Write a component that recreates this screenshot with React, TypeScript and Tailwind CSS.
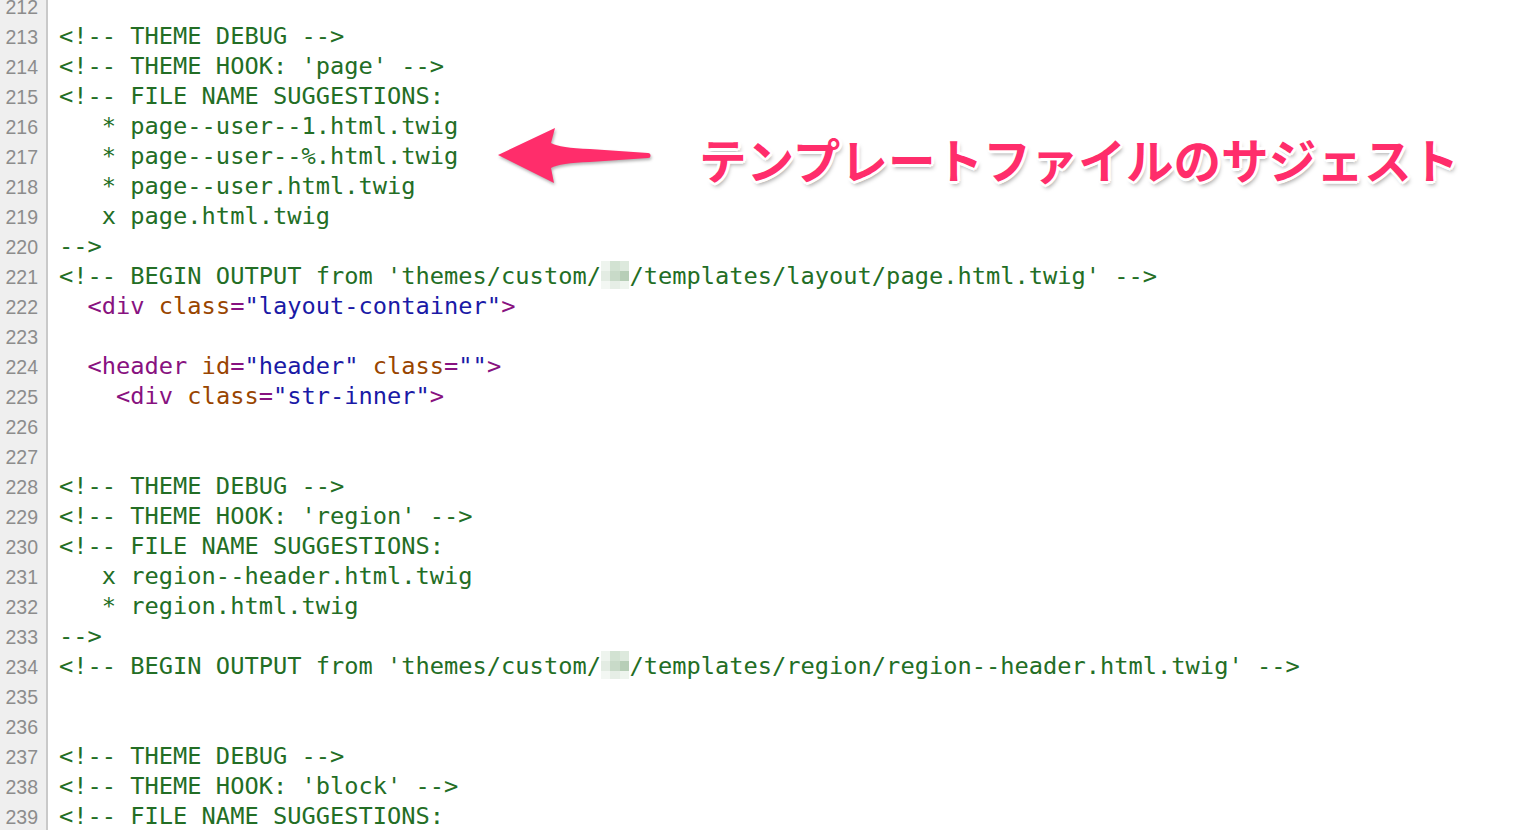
import React from 'react';

type Seg = { t: string; c?: 'cm' | 'tag' | 'attr' | 'val' | 'blur' };

const color: Record<string, string> = {
  cm: 'text-[#236e25]',
  tag: 'text-[#881280]',
  attr: 'text-[#994500]',
  val: 'text-[#1a1aa6]',
};

const tag = (name: string, attrs: [string, string][], indent: string): Seg[] => {
  const out: Seg[] = [{ t: indent }, { t: '<' + name, c: 'tag' }];
  attrs.forEach(([k, v]) => {
    out.push({ t: ' ' + k, c: 'attr' });
    out.push({ t: '=', c: 'tag' });
    out.push({ t: '"' + v + '"', c: 'val' });
  });
  out.push({ t: '>', c: 'tag' });
  return out;
};

const cm = (t: string): Seg[] => [{ t, c: 'cm' }];

const lines: Seg[][] = [
  [],
  cm('<!-- THEME DEBUG -->'),
  cm("<!-- THEME HOOK: 'page' -->"),
  cm('<!-- FILE NAME SUGGESTIONS:'),
  cm('   * page--user--1.html.twig'),
  cm('   * page--user--%.html.twig'),
  cm('   * page--user.html.twig'),
  cm('   x page.html.twig'),
  cm('-->'),
  [
    { t: "<!-- BEGIN OUTPUT from 'themes/custom/", c: 'cm' },
    { t: '', c: 'blur' },
    { t: "/templates/layout/page.html.twig' -->", c: 'cm' },
  ],
  tag('div', [['class', 'layout-container']], '  '),
  [],
  tag('header', [['id', 'header'], ['class', '']], '  '),
  tag('div', [['class', 'str-inner']], '    '),
  [],
  [],
  cm('<!-- THEME DEBUG -->'),
  cm("<!-- THEME HOOK: 'region' -->"),
  cm('<!-- FILE NAME SUGGESTIONS:'),
  cm('   x region--header.html.twig'),
  cm('   * region.html.twig'),
  cm('-->'),
  [
    { t: "<!-- BEGIN OUTPUT from 'themes/custom/", c: 'cm' },
    { t: '', c: 'blur' },
    { t: "/templates/region/region--header.html.twig' -->", c: 'cm' },
  ],
  [],
  [],
  cm('<!-- THEME DEBUG -->'),
  cm("<!-- THEME HOOK: 'block' -->"),
  cm('<!-- FILE NAME SUGGESTIONS:'),
];

// 隠された名前（モザイク）
function Blur() {
  const cells = [
    'bg-[#eef4ee]', 'bg-[#d2e2d2]', 'bg-[#dde9dd]',
    'bg-[#e3ece3]', 'bg-[#c8dac8]', 'bg-[#b7ceb7]',
    'bg-[#f3f7f3]', 'bg-[#e6eee6]', 'bg-[#eef4ee]',
  ];
  return (
    <span className="inline-grid h-[28px] w-[28.5px] grid-cols-3 grid-rows-[10px_10px_8px] align-top">
      {cells.map((c, i) => (
        <span key={i} className={c} />
      ))}
    </span>
  );
}

export default function App() {
  return (
    <div className="relative h-[830px] w-[1522px] overflow-hidden bg-white">
      <div className="-mt-2 flex">
        <div className="w-[48px] shrink-0 border-r-2 border-[#c9c9c9] bg-[#efefef] pr-[8px] text-right font-['Liberation_Sans',Arial,sans-serif] text-[19.5px] leading-[30px] text-[#8c8c8c]">
          {lines.map((_, i) => (
            <div key={i}>{212 + i}</div>
          ))}
        </div>
        <div className="-mt-px pl-[11px] font-['DejaVu_Sans_Mono',monospace] text-[23.7px] leading-[30px] whitespace-pre">
          {lines.map((segs, i) => (
            <div key={i} className="h-[30px]">
              {segs.map((s, j) =>
                s.c === 'blur' ? <Blur key={j} /> : (
                  <span key={j} className={s.c ? color[s.c] : ''}>{s.t}</span>
                )
              )}
            </div>
          ))}
        </div>
      </div>

      {/* 注釈 */}
      <svg
        className="absolute left-[490px] top-[115px] drop-shadow-[1px_2px_1.5px_rgba(0,0,0,0.3)]"
        width="170"
        height="80"
        viewBox="0 0 170 80"
      >
        <path
          d="M8 40 L65 13 L61 28 Q70 33 100 34 L158 38 A2.5 2.5 0 0 1 158 43 L100 47 Q70 48 61 53 L64 68 Z"
          fill="#ff2d6b"
        />
      </svg>
      <div className="absolute left-[699px] top-[131px] font-['Noto_Sans_CJK_JP',sans-serif] text-[47.6px] font-bold leading-[56px] text-[#ff2d6b] whitespace-nowrap [text-shadow:3px_0_0_#fff,-3px_0_0_#fff,0_3px_0_#fff,0_-3px_0_#fff,2px_2px_0_#fff,-2px_2px_0_#fff,2px_-2px_0_#fff,-2px_-2px_0_#fff,2px_4px_4px_rgba(0,0,0,0.35)]">
        テンプレートファイルのサジェスト
      </div>
    </div>
  );
}
